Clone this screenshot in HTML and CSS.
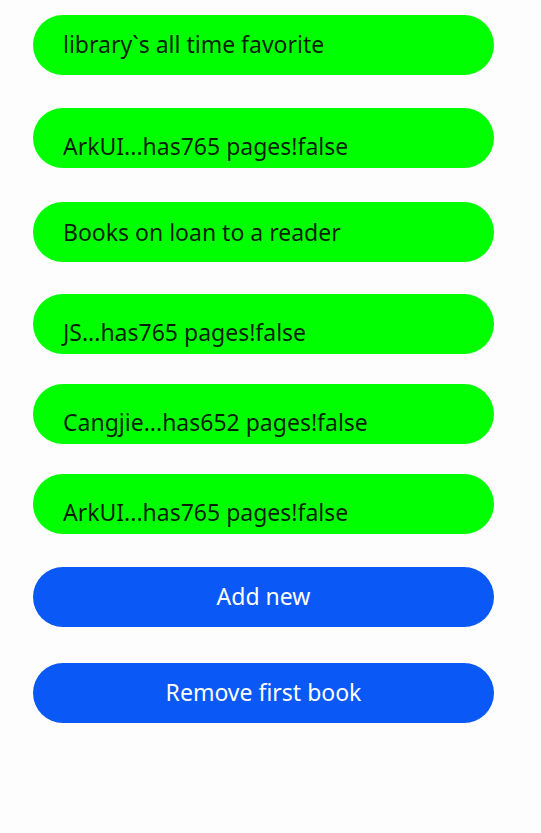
FILE: index.html
```html
<!DOCTYPE html>
<html>
<head>
<meta charset="utf-8">
<link rel="stylesheet" href="styles.css">
</head>
<body>
<main class="page">
  <div class="pill book title">library`s all time favorite</div>
  <div class="pill book low g33">ArkUI...has765 pages!false</div>
  <div class="pill book g34">Books on loan to a reader</div>
  <div class="pill book low g32">JS...has765 pages!false</div>
  <div class="pill book low g30">Cangjie...has652 pages!false</div>
  <div class="pill book low g30">ArkUI...has765 pages!false</div>
  <button class="pill action g33">Add new</button>
  <button class="pill action g36">Remove first book</button>
</main>
</body>
</html>
```

FILE: styles.css
```css
html, body {
  margin: 0;
  padding: 0;
  background: #fdfdfd;
}
.page {
  display: flex;
  flex-direction: column;
  width: 461px;
  margin-left: 33px;
  padding-top: 15px;
  font-family: "Noto Sans", sans-serif;
}
.pill {
  box-sizing: border-box;
  height: 60px;
  border-radius: 30px;
  font-size: 23px;
  display: flex;
  align-items: center;
  border: none;
  margin: 0;
  font-family: inherit;
}
.book {
  background: #00ff00;
  color: rgba(0, 0, 0, 0.88);
  padding-left: 30px;
}
.title { padding-bottom: 2px; }
.low { padding-top: 16px; }
.action {
  background: #0a59f7;
  color: #ffffff;
  justify-content: center;
  padding-bottom: 3px;
}
.g30 { margin-top: 30px; }
.g31 { margin-top: 31px; }
.g32 { margin-top: 32px; }
.g33 { margin-top: 33px; }
.g34 { margin-top: 34px; }
.g36 { margin-top: 36px; }
```
